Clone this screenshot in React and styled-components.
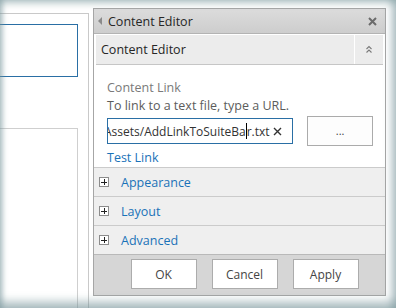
import React from "react";
import styled, { createGlobalStyle } from "styled-components";

const GlobalStyle = createGlobalStyle`
  html, body { margin: 0; padding: 0; background: #ffffff; }
  body { font-family: "Open Sans", "Noto Sans", sans-serif; }
  * { box-sizing: border-box; }
`;

const Frame = styled.div`
  position: relative;
  width: 396px;
  height: 308px;
  overflow: hidden;
  background: #ffffff;
  display: flex;
  align-items: flex-start;
  &::after {
    content: "";
    position: absolute;
    inset: 0;
    pointer-events: none;
    box-shadow:
      inset 0 7px 6px -3px rgba(120, 150, 155, 0.45),
      inset 5px 0 5px -2px rgba(120, 150, 155, 0.5),
      inset -9px 0 7px -4px rgba(120, 150, 155, 0.5),
      inset 0 -12px 8px -5px rgba(120, 150, 155, 0.55);
  }
`;

const PageArea = styled.div`
  width: 93px;
  height: 100%;
  padding-top: 13px;
  flex: none;
`;

const PageCanvas = styled.div`
  width: 89px;
  height: 100%;
  border-top: 1px solid #c9c9c9;
  border-right: 1px solid #c9c9c9;
  display: flex;
  flex-direction: column;
`;

const Zone = styled.div`
  width: 88px;
  margin-left: -10px;
  margin-top: ${(p) => p.$top}px;
  height: ${(p) => p.$h}px;
  border: 1px solid ${(p) => (p.$active ? "#2a6fa5" : "#cfcfcf")};
  flex: none;
`;

const Panel = styled.div`
  margin-top: 8px;
  width: 293px;
  height: 288px;
  border: 1px solid #a6a6a6;
  background: #ffffff;
  display: flex;
  flex-direction: column;
  flex: none;
`;

const TitleBar = styled.div`
  height: 25px;
  display: flex;
  align-items: center;
  padding: 0 8px 0 4px;
  background: linear-gradient(#dcdcdc, #cdcdcd);
  border-bottom: 1px solid #b3b3b3;
  color: #262626;
  font-size: 12.5px;
`;

const BackArrow = styled.span`
  width: 0;
  height: 0;
  border-top: 4px solid transparent;
  border-bottom: 4px solid transparent;
  border-right: 4px solid #8a8a8a;
  margin-right: 6px;
`;

const TitleText = styled.span`
  flex: 1;
`;

const CloseIcon = styled.svg`
  width: 9px;
  height: 9px;
`;

const SectionHeader = styled.div`
  margin: 1px 2px 0;
  height: 30px;
  display: flex;
  align-items: stretch;
  background: #ececec;
  border-bottom: 1px solid #c6c6c6;
  font-size: 12.5px;
  color: #262626;
`;

const SectionTitle = styled.span`
  flex: 1;
  display: flex;
  align-items: center;
  padding-left: 5px;
`;

const ChevronCell = styled.span`
  width: 29px;
  border-left: 1px solid #ffffff;
  display: flex;
  align-items: center;
  justify-content: center;
`;

const Content = styled.div`
  padding: 14px 12px 0 13px;
  height: 102px;
  display: flex;
  flex-direction: column;
`;

const Label = styled.div`
  font-size: 12.5px;
  line-height: 17px;
  color: ${(p) => (p.$muted ? "#7a7a7a" : "#5c5c5c")};
  margin-top: ${(p) => p.$mt || 0}px;
`;

const InputRow = styled.div`
  display: flex;
  align-items: center;
  gap: 14px;
  margin-top: 2px;
`;

const UrlBox = styled.div`
  width: 187px;
  height: 26px;
  border: 1px solid #2a6fa5;
  display: flex;
  align-items: center;
  overflow: hidden;
  font-size: 12px;
  color: #333333;
  padding-right: 10px;
`;

const UrlText = styled.span`
  flex: 1;
  white-space: nowrap;
  margin-left: -4px;
  overflow: hidden;
`;

const Caret = styled.span`
  display: inline-block;
  width: 1px;
  height: 16px;
  background: #000;
  vertical-align: -3px;
`;

const ClearIcon = styled.svg`
  width: 9px;
  height: 9px;
  flex: none;
`;

const BrowseButton = styled.div`
  width: 66px;
  height: 30px;
  border: 1px solid #ababab;
  background: #fdfdfd;
  display: flex;
  align-items: center;
  justify-content: center;
  font-size: 11px;
  color: #444;
  padding-bottom: 2px;
`;

const LinkText = styled.div`
  margin-top: 3px;
  font-size: 12.5px;
  color: #1a72b8;
`;

const Row = styled.div`
  height: 29px;
  border-top: 1px solid #cbcbcb;
  background: #efefef;
  display: flex;
  align-items: center;
  padding-left: 5px;
  gap: 12px;
  font-size: 12.5px;
  color: #1a72b8;
`;

const PlusBox = styled.span`
  width: 10px;
  height: 10px;
  border: 1px solid #8c8c8c;
  background: #fff;
  position: relative;
  display: inline-block;
  &::before, &::after {
    content: "";
    position: absolute;
    background: #222;
  }
  &::before { left: 1px; right: 1px; top: 3.5px; height: 1px; }
  &::after { top: 1px; bottom: 1px; left: 3.5px; width: 1px; }
`;

const Footer = styled.div`
  flex: 1;
  border-top: 1px solid #b9b9b9;
  background: #d6d6d6;
  display: flex;
  justify-content: center;
  align-items: flex-start;
  gap: 15px;
  padding-top: 4px;
  padding-left: 10px;
`;

const Button = styled.div`
  width: 66px;
  height: 30px;
  border: 1px solid #acacac;
  background: #ffffff;
  display: flex;
  align-items: center;
  justify-content: center;
  font-size: 12px;
  color: #444444;
`;

export default function App() {
  return (
    <>
      <GlobalStyle />
      <Frame>
        <PageArea>
          <PageCanvas>
            <Zone $top={10} $h={53} $active />
            <Zone $top={51} $h={300} />
          </PageCanvas>
        </PageArea>
        <Panel>
          <TitleBar>
            <BackArrow />
            <TitleText>Content Editor</TitleText>
            <CloseIcon viewBox="0 0 9 9">
              <path d="M1 1 L8 8 M8 1 L1 8" stroke="#6b6b6b" strokeWidth="2" />
            </CloseIcon>
          </TitleBar>
          <SectionHeader>
            <SectionTitle>Content Editor</SectionTitle>
            <ChevronCell>
              <svg width="8" height="9" viewBox="0 0 8 9">
                <path d="M1.5 4 L4 1.5 L6.5 4 M1.5 7.5 L4 5 L6.5 7.5" stroke="#7a7a7a" strokeWidth="1.1" fill="none" />
              </svg>
            </ChevronCell>
          </SectionHeader>
          <Content>
            <Label $muted>Content Link</Label>
            <Label $mt={1}>To link to a text file, type a URL.</Label>
            <InputRow>
              <UrlBox>
                <UrlText>
                  Assets/AddLinkToSuiteBa<Caret />r.txt
                </UrlText>
                <ClearIcon viewBox="0 0 9 9">
                  <path d="M1 1 L8 8 M8 1 L1 8" stroke="#333" strokeWidth="1.4" />
                </ClearIcon>
              </UrlBox>
              <BrowseButton>...</BrowseButton>
            </InputRow>
            <LinkText>Test Link</LinkText>
          </Content>
          <Row><PlusBox />Appearance</Row>
          <Row><PlusBox />Layout</Row>
          <Row><PlusBox />Advanced</Row>
          <Footer>
            <Button>OK</Button>
            <Button>Cancel</Button>
            <Button>Apply</Button>
          </Footer>
        </Panel>
      </Frame>
    </>
  );
}
